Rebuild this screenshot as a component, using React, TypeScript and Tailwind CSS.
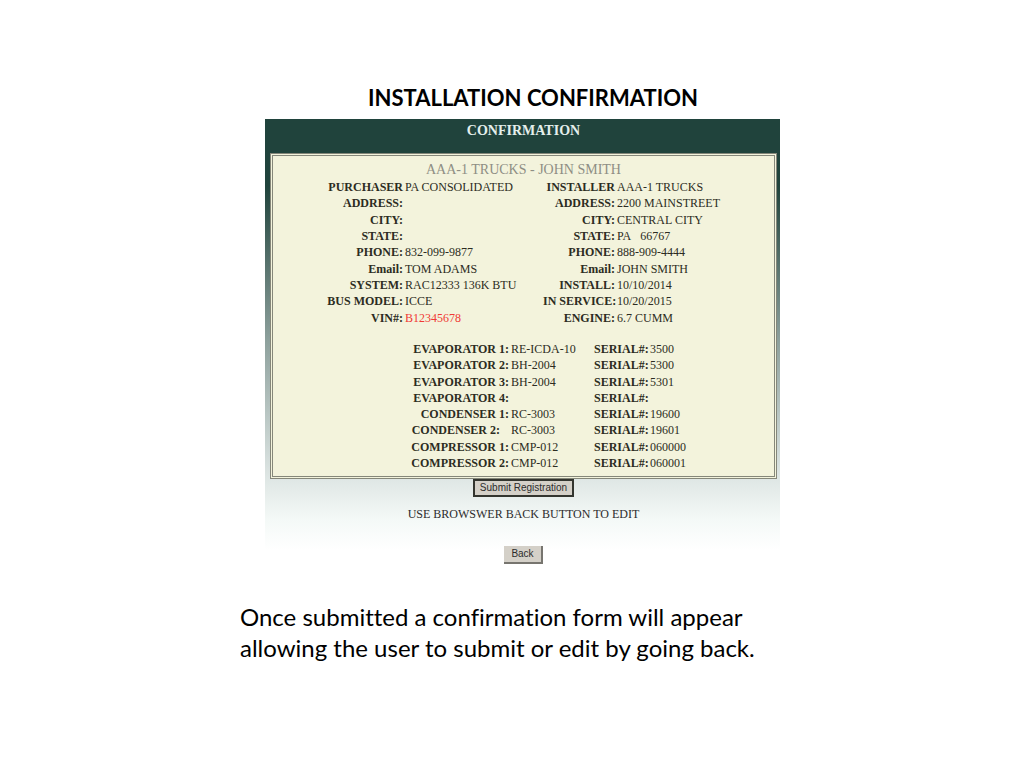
type Pair = { label: string; value: string; alert?: boolean }

const details: [Pair, Pair][] = [
  [{ label: 'PURCHASER', value: 'PA CONSOLIDATED' }, { label: 'INSTALLER', value: 'AAA-1 TRUCKS' }],
  [{ label: 'ADDRESS:', value: '' }, { label: 'ADDRESS:', value: '2200 MAINSTREET' }],
  [{ label: 'CITY:', value: '' }, { label: 'CITY:', value: 'CENTRAL CITY' }],
  [{ label: 'STATE:', value: '' }, { label: 'STATE:', value: 'PA\u00a0\u00a0 66767' }],
  [{ label: 'PHONE:', value: '832-099-9877' }, { label: 'PHONE:', value: '888-909-4444' }],
  [{ label: 'Email:', value: 'TOM ADAMS' }, { label: 'Email:', value: 'JOHN SMITH' }],
  [{ label: 'SYSTEM:', value: 'RAC12333 136K BTU' }, { label: 'INSTALL:', value: '10/10/2014' }],
  [{ label: 'BUS MODEL:', value: 'ICCE' }, { label: 'IN SERVICE:', value: '10/20/2015' }],
  [{ label: 'VIN#:', value: 'B12345678', alert: true }, { label: 'ENGINE:', value: '6.7 CUMM' }],
]

const parts = [
  { name: 'EVAPORATOR 1:', model: 'RE-ICDA-10', serial: '3500' },
  { name: 'EVAPORATOR 2:', model: 'BH-2004', serial: '5300' },
  { name: 'EVAPORATOR 3:', model: 'BH-2004', serial: '5301' },
  { name: 'EVAPORATOR 4:', model: '', serial: '' },
  { name: 'CONDENSER 1:', model: 'RC-3003', serial: '19600' },
  { name: 'CONDENSER 2:\u00a0\u00a0\u00a0', model: 'RC-3003', serial: '19601' },
  { name: 'COMPRESSOR 1:', model: 'CMP-012', serial: '060000' },
  { name: 'COMPRESSOR 2:', model: 'CMP-012', serial: '060001' },
]

function DetailsTable() {
  return (
    <table className="h-[147px] w-full table-fixed text-xs leading-4">
      <colgroup>
        <col className="w-[130px]" />
        <col className="w-[140px]" />
        <col className="w-[72px]" />
        <col />
      </colgroup>
      <tbody>
        {details.map((row, i) => (
          <tr key={i}>
            {row.map((cell, j) => [
              <th key={`l${j}`} scope="row" className="p-0 text-right font-bold whitespace-nowrap">
                {cell.label}
              </th>,
              <td key={`v${j}`} className={`p-0 pl-[2px] whitespace-nowrap ${cell.alert ? 'text-[#f03a34]' : ''}`}>
                {cell.value}
              </td>,
            ])}
          </tr>
        ))}
      </tbody>
    </table>
  )
}

function PartsTable() {
  return (
    <table className="mt-[15px] h-[130px] w-full table-fixed text-xs leading-4">
      <colgroup>
        <col className="w-[236px]" />
        <col className="w-[85px]" />
        <col className="w-[54px]" />
        <col />
      </colgroup>
      <tbody>
        {parts.map(part => (
          <tr key={part.name}>
            <th scope="row" className="p-0 text-right font-bold whitespace-nowrap">{part.name}</th>
            <td className="p-0 pl-[2px] whitespace-nowrap">{part.model}</td>
            <th scope="row" className="p-0 text-right font-bold whitespace-nowrap">SERIAL#:</th>
            <td className="p-0 pl-[2px] whitespace-nowrap">{part.serial}</td>
          </tr>
        ))}
      </tbody>
    </table>
  )
}

export default function App() {
  return (
    <main className="min-h-screen bg-white pt-[82px] font-['Lato',sans-serif] text-black [font-variant-ligatures:none]">
      <div className="mx-auto max-w-[544px]">
        <h1 className="pl-[42px] text-center text-[22px] leading-8 font-bold">INSTALLATION CONFIRMATION</h1>

        <section className="mt-[5px] mr-1 ml-[25px] bg-[linear-gradient(to_bottom,#20433c_15%,#8ea19d_50%,#dde5e3_80%,#f4f9f7_90%,#ffffff_97%)] pr-[3px] pl-[5px] font-['Liberation_Serif',serif] text-[#2c2c22]">
          <h2 className="h-[34px] pt-1 text-center text-sm leading-4 font-bold text-[#e4efec]">CONFIRMATION</h2>

          <div className="border-3 border-double border-[#85877a] bg-[#f3f3dc] pt-[5px] pb-[5px]">
            <p className="text-center text-sm leading-[18px] text-[#8e8e84]">AAA-1 TRUCKS - JOHN SMITH</p>
            <DetailsTable />
            <PartsTable />
          </div>

          <div className="flex flex-col items-center font-['Liberation_Sans',sans-serif] text-[10px] leading-3 text-[#2c2c2c]">
            <button type="button" className="h-[18px] border-2 border-[#33352f] bg-[#d4d0c8] px-[5px]">
              Submit Registration
            </button>
            <p className="mt-[9px] font-['Liberation_Serif',serif] text-xs leading-4">USE BROWSWER BACK BUTTON TO EDIT</p>
            <button type="button" className="mt-6 h-[18px] border-r-2 border-b-2 border-[#77756f] bg-[#d4d0c8] px-[7px]">
              Back
            </button>
          </div>
        </section>

        <p className="mt-[37px] text-2xl leading-[31px]">
          Once submitted a confirmation form will appear
          <br />
          allowing the user to submit or edit by going back.
        </p>
      </div>
    </main>
  )
}
